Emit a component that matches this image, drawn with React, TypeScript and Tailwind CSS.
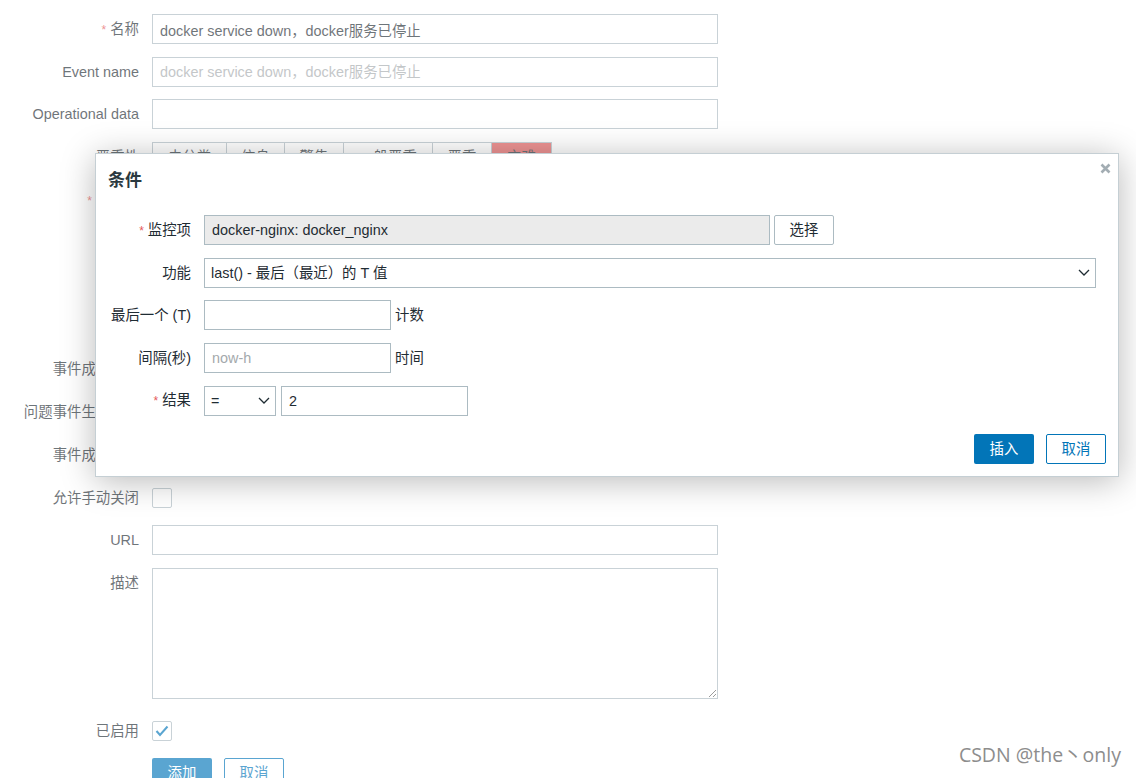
import type { ReactNode } from 'react'

const font = { fontFamily: '"Liberation Sans", "Noto Sans CJK SC", sans-serif' }

function Row({
  label,
  required,
  top,
  className = '',
  children,
}: {
  label: string
  required?: boolean
  top?: boolean
  className?: string
  children?: ReactNode
}) {
  return (
    <div className={`flex ${top ? 'items-start' : 'items-center'} ${className}`}>
      <div
        className={`w-[139px] shrink-0 text-right whitespace-nowrap text-[#1f2c33] ${top ? 'pt-[6px]' : ''}`}
      >
        {required && <span className="mr-[4px] text-[12px] text-[#e45959]">*</span>}
        {label}
      </div>
      <div className="ml-[13px] flex items-center">{children}</div>
    </div>
  )
}

function Chevron() {
  return (
    <svg width="12" height="7" viewBox="0 0 12 7" fill="none" className="shrink-0">
      <polyline points="1,1 6,6 11,1" stroke="#1f2c33" strokeWidth="1.3" />
    </svg>
  )
}

const inputCls =
  'h-[30px] border border-[#acbbc2] px-[7px] text-[14.4px] text-[#1f2c33] outline-none placeholder:text-[#a4a9ac]'

const severities = [
  { name: '未分类', w: 'w-[75px]' },
  { name: '信息', w: 'w-[59px]' },
  { name: '警告', w: 'w-[60px]' },
  { name: '一般严重', w: 'w-[90px]' },
  { name: '严重', w: 'w-[60px]' },
]

function DialogRow({
  label,
  required,
  children,
}: {
  label: string
  required?: boolean
  children: ReactNode
}) {
  return (
    <div className="flex items-center">
      <div className="w-[83px] shrink-0 text-right whitespace-nowrap text-[#1f2c33]">
        {required && <span className="mr-[4px] text-[12px] text-[#e45959]">*</span>}
        {label}
      </div>
      <div className="ml-[13px] flex items-center">{children}</div>
    </div>
  )
}

export default function App() {
  return (
    <div
      className="relative h-[778px] w-[1136px] overflow-hidden bg-white text-[14.4px] leading-[18px]"
      style={font}
    >
      {/* page form behind the dialog */}
      <div className="flex flex-col gap-[12.7px] pt-[14px]">
        <Row label="名称" required>
          <input className={`${inputCls} w-[566px] bg-white`} defaultValue="docker service down，docker服务已停止" />
        </Row>
        <Row label="Event name">
          <input className={`${inputCls} w-[566px] bg-white`} placeholder="docker service down，docker服务已停止" />
        </Row>
        <Row label="Operational data">
          <input className={`${inputCls} w-[566px] bg-white`} />
        </Row>
        <Row label="严重性">
          <div className="flex">
            {severities.map((s) => (
              <div
                key={s.name}
                className={`${s.w} -ml-px flex h-[30px] items-center justify-center border border-[#acbbc2] bg-white text-[#1f2c33] first:ml-0`}
              >
                {s.name}
              </div>
            ))}
            <div className="-ml-px flex h-[30px] w-[61px] items-center justify-center border border-[#acbbc2] bg-[#e45959] text-[#1f2c33]">
              灾难
            </div>
          </div>
        </Row>
        <Row label="表达式" required top>
          <div className="h-[157px] w-[566px]" />
        </Row>
        <Row label="事件成功迭代">
          <div className="h-[30px]" />
        </Row>
        <Row label="问题事件生成模式">
          <div className="h-[30px]" />
        </Row>
        <Row label="事件成功关闭">
          <div className="h-[30px]" />
        </Row>
        <Row label="允许手动关闭">
          <div className="h-[30px] flex items-center">
            <div className="h-[20px] w-[20px] rounded-[2px] border border-[#acbbc2] bg-white" />
          </div>
        </Row>
        <Row label="URL">
          <input className={`${inputCls} w-[566px] bg-white`} />
        </Row>
        <Row label="描述" top>
          <textarea className="h-[131px] w-[566px] border border-[#acbbc2] bg-white px-[7px] py-[5px] outline-none" />
        </Row>
        <Row label="已启用" className="mt-[4px]">
          <div className="h-[30px] flex items-center">
            <div className="flex h-[20px] w-[20px] items-center justify-center rounded-[2px] border border-[#acbbc2] bg-white">
              <svg width="14" height="12" viewBox="0 0 14 12" fill="none">
                <polyline points="1.5,6 5,10 12.5,1.5" stroke="#0275b8" strokeWidth="2" />
              </svg>
            </div>
          </div>
        </Row>
        <div className="flex gap-[12px] pl-[152px]">
          <button className="h-[30px] w-[60px] rounded-[2px] bg-[#0275b8] text-white">添加</button>
          <button className="h-[30px] w-[60px] rounded-[2px] border border-[#0275b8] bg-white text-[#0275b8]">
            取消
          </button>
        </div>
      </div>

      {/* dimming layer */}
      <div className="absolute inset-0 bg-white/35" />

      {/* condition dialog */}
      <div className="absolute left-[95px] top-[153px] flex h-[324px] w-[1024px] flex-col border border-[#c5cfd4] bg-white px-[12px] shadow-[0_4px_32px_rgba(0,0,0,0.28)]">
        <button className="absolute right-[6px] top-[8px] p-[1px]" aria-label="Close">
          <svg width="11" height="11" viewBox="0 0 11 11">
            <path d="M1.5 1.5 L9.5 9.5 M9.5 1.5 L1.5 9.5" stroke="#a3adb3" strokeWidth="2.6" />
          </svg>
        </button>
        <h4 className="mt-[16px] text-[17px] font-bold leading-[22px] text-[#2a3940]">条件</h4>
        <div className="mt-[23px] flex flex-col gap-[12.7px]">
          <DialogRow label="监控项" required>
            <input
              readOnly
              className={`${inputCls} w-[566px] bg-[#ebebeb]`}
              defaultValue="docker-nginx: docker_nginx"
            />
            <button className="ml-[4px] h-[30px] w-[60px] rounded-[2px] border border-[#acbbc2] bg-white text-[#1f2c33]">
              选择
            </button>
          </DialogRow>
          <DialogRow label="功能">
            <div className="flex h-[30px] w-[892px] items-center justify-between border border-[#acbbc2] pl-[6px] pr-[5px] text-[#1f2c33]">
              <span>last() - 最后（最近）的 T 值</span>
              <Chevron />
            </div>
          </DialogRow>
          <DialogRow label="最后一个 (T)">
            <input className={`${inputCls} w-[187px] bg-white`} />
            <span className="ml-[4px] text-[#1f2c33]">计数</span>
          </DialogRow>
          <DialogRow label="间隔(秒)">
            <input className={`${inputCls} w-[187px] bg-white`} placeholder="now-h" />
            <span className="ml-[4px] text-[#1f2c33]">时间</span>
          </DialogRow>
          <DialogRow label="结果" required>
            <div className="flex h-[30px] w-[72px] items-center justify-between border border-[#acbbc2] pl-[6px] pr-[5px] text-[#1f2c33]">
              <span>=</span>
              <Chevron />
            </div>
            <input className={`${inputCls} ml-[5px] w-[187px] bg-white`} defaultValue="2" />
          </DialogRow>
        </div>
        <div className="mt-auto mb-[12px] flex justify-end gap-[12px]">
          <button className="h-[30px] w-[60px] rounded-[2px] bg-[#0275b8] text-white">插入</button>
          <button className="h-[30px] w-[60px] rounded-[2px] border border-[#0275b8] bg-white text-[#0275b8]">
            取消
          </button>
        </div>
      </div>

      <div
        className="absolute bottom-[10px] right-[15px] text-[19.5px] leading-[26px] text-[#8d8d8d] [text-shadow:0_0_2px_#fff]"
        style={{ fontFamily: '"Open Sans", "Noto Sans CJK SC", sans-serif' }}
      >
        CSDN @the丶only
      </div>
    </div>
  )
}
